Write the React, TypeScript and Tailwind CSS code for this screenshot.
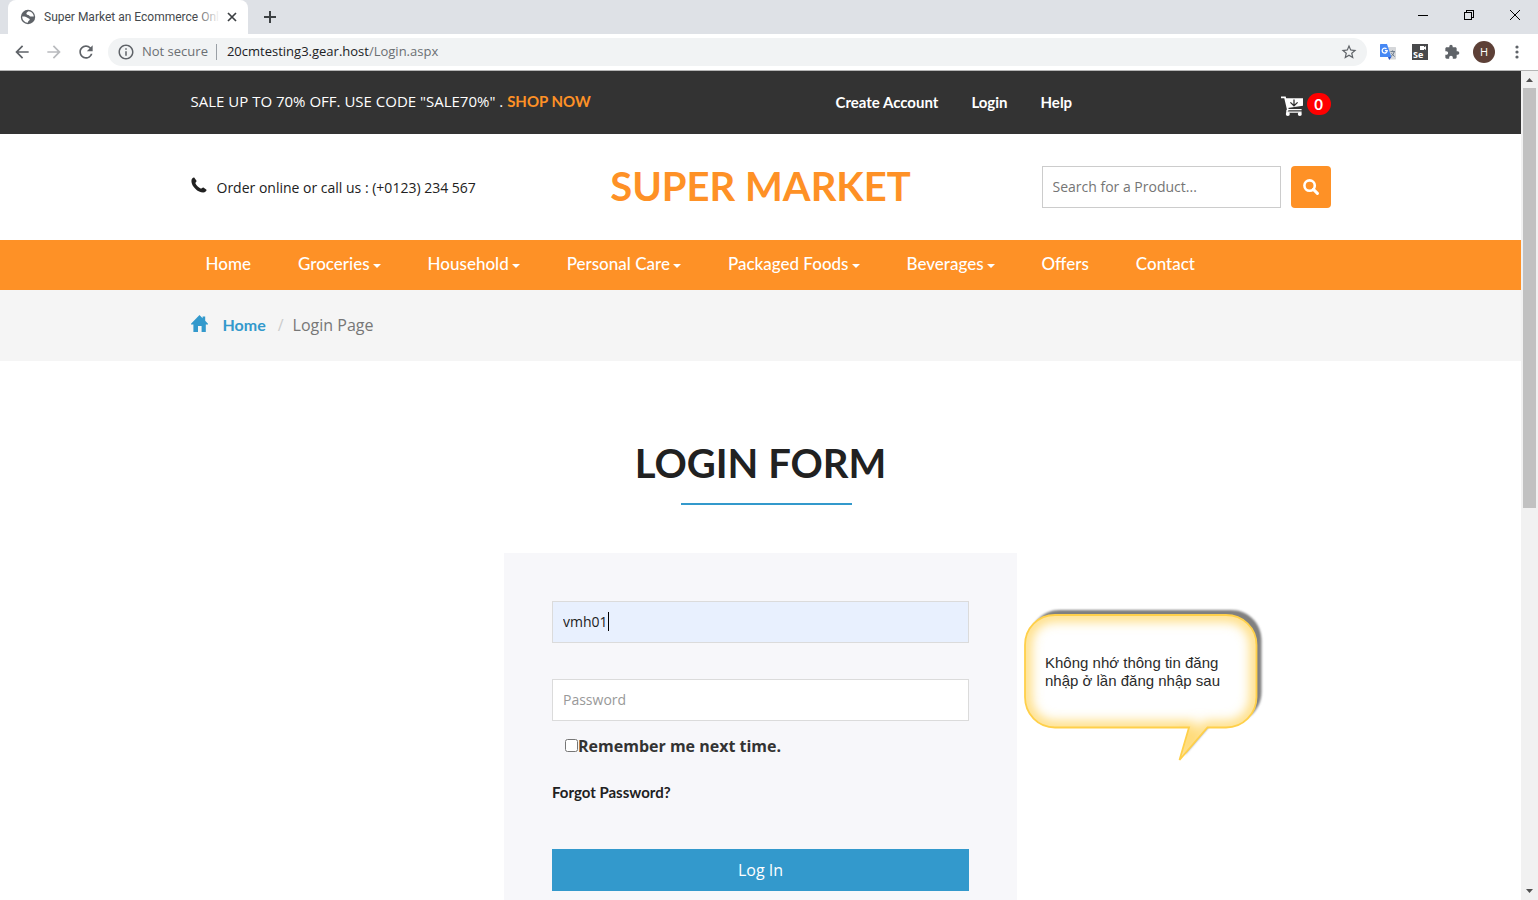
import type { ReactNode } from "react";
import { MdRefresh, MdExtension, MdStarBorder, MdArrowBack, MdArrowForward, MdInfoOutline } from "react-icons/md";

const ui = "font-['Open_Sans','Noto_Sans',sans-serif]";
const display = "font-[Lato,'Open_Sans',sans-serif]";

function TabStrip() {
  return (
    <div className="flex h-[34px] shrink-0 items-stretch bg-[#dee1e6]">
      <div className="ml-2 flex w-60 items-center rounded-t-lg bg-white pl-3 pr-2">
        <svg viewBox="0 0 16 16" className="size-4 shrink-0">
          <circle cx="8" cy="8" r="7.2" fill="#5f6368" />
          <path d="M8.6 2.2C6.6 3 6 4.2 6.6 5.2C7.4 6 9 5.6 9.4 6.8C9.6 7.8 11.4 7.4 13.8 7.4C13.8 5 11.4 2.4 8.6 2.2Z" fill="#fff" />
          <path d="M2.2 7.6C4 7.4 6.2 7.8 7.4 8.8C8.4 9.8 9.8 9.4 9.8 10.6C9.6 11.8 8 11.6 7.8 13.8C4.6 13.6 2.2 11 2.2 7.6Z" fill="#fff" />
        </svg>
        <span className="relative ml-2 w-[172px] shrink-0 whitespace-nowrap font-[Roboto,sans-serif] text-xs text-[#45494d]">
          Super Market an Ecommerce Onl
          <span className="absolute inset-y-0 -right-1 w-6 bg-gradient-to-r from-transparent to-white" />
        </span>
        <button aria-label="Close tab" className="ml-2 flex size-4 items-center justify-center">
          <svg viewBox="0 0 10 10" className="size-[10px] stroke-[#3c4043]" strokeWidth="1.7">
            <path d="M1 1L9 9M9 1L1 9" />
          </svg>
        </button>
      </div>
      <button aria-label="New tab" className="flex w-11 items-center justify-center">
        <svg viewBox="0 0 12 12" className="size-3 stroke-[#3c4043]" strokeWidth="2">
          <path d="M6 0V12M0 6H12" />
        </svg>
      </button>
      <div className="ml-auto flex h-[29px] items-center">
        <button aria-label="Minimize" className="flex w-[46px] justify-center">
          <svg viewBox="0 0 10 10" className="size-[10px] stroke-black" shapeRendering="crispEdges">
            <path d="M0 5.5H10" />
          </svg>
        </button>
        <button aria-label="Restore" className="flex w-[46px] justify-center">
          <svg viewBox="0 0 10 10" className="size-[10px] fill-none stroke-black" shapeRendering="crispEdges">
            <path d="M.5 2.5H7.5V9.5H.5ZM2.5 2.5V.5H9.5V7.5H7.5" />
          </svg>
        </button>
        <button aria-label="Close window" className="flex w-[46px] justify-center">
          <svg viewBox="0 0 10 10" className="size-[10px] stroke-black">
            <path d="M0 0L10 10M10 0L0 10" />
          </svg>
        </button>
      </div>
    </div>
  );
}

function TranslateIcon() {
  return (
    <svg viewBox="0 0 16 16" className="size-4">
      <path d="M6 3H15.4Q16 3 16 3.6V14.8Q16 15.4 15.4 15.4H9Z" fill="#d5d7da" />
      <path d="M10.4 7.6H15M12.6 6.4V7.6M14.2 7.6C13.8 9.8 12.4 11.4 11 12.4M11.4 9.2L14.6 12.6" stroke="#6b7b8c" strokeWidth="1" fill="none" />
      <path d="M.6 0H7L11.4 13H.6Q0 13 0 12.4V.6Q0 0 .6 0Z" fill="#4688f4" />
      <path d="M8 13H11.4L9.2 16Z" fill="#2a56c6" />
      <path d="M6.5 4.8A2.5 2.5 0 1 0 7.2 6.7H4.9" stroke="#fff" strokeWidth="1.3" fill="none" />
    </svg>
  );
}

function Toolbar() {
  return (
    <div className="flex h-9 shrink-0 items-center bg-white px-3">
      <button aria-label="Back" className="text-[#5f6368]">
        <MdArrowBack className="size-5" />
      </button>
      <button aria-label="Forward" className="ml-3 text-[#b9bbbe]">
        <MdArrowForward className="size-5" />
      </button>
      <button aria-label="Reload" className="ml-3 text-[#5f6368]">
        <MdRefresh className="size-5" />
      </button>
      <div className="ml-3 flex h-7 flex-1 items-center rounded-full bg-[#f1f3f4] px-[9px] text-[13px]">
        <MdInfoOutline className="size-[18px] text-[#5f6368]" />
        <span className="ml-[7px] text-[#6b6f73]">Not secure</span>
        <span className="ml-2 mr-[10px] h-4 w-px bg-[#9aa0a6]" />
        <span className="text-[#202124]">
          20cmtesting3.gear.host<span className="text-[#6b6f73]">/Login.aspx</span>
        </span>
        <button aria-label="Bookmark this page" className="ml-auto text-[#5f6368]">
          <MdStarBorder className="size-[18px]" />
        </button>
      </div>
      <div className="ml-[13px] flex items-center gap-4">
        <button aria-label="Google Translate">
          <TranslateIcon />
        </button>
        <button aria-label="Selenium IDE" className="relative flex size-4 items-end bg-[#48494b] pl-px text-[9px] font-bold leading-[10px] text-white">
          Se
          <svg viewBox="0 0 6 4" className="absolute right-[2px] top-[2px] h-1 w-[6px] fill-white">
            <path d="M0 0H4V1.3L6 0V4L4 2.7V4H0Z" />
          </svg>
        </button>
        <button aria-label="Extensions" className="text-[#5f6368]">
          <MdExtension className="size-4" />
        </button>
      </div>
      <button aria-label="Profile" className="ml-[13px] size-[22px] rounded-full bg-[#5d4037] text-[11px] leading-[22px] text-white">
        H
      </button>
      <button aria-label="Menu" className="ml-[13px] flex w-[18px] justify-center">
        <svg viewBox="0 0 4 14" className="h-[14px] w-1 fill-[#5f6368]">
          <circle cx="2" cy="2" r="1.6" />
          <circle cx="2" cy="7" r="1.6" />
          <circle cx="2" cy="12" r="1.6" />
        </svg>
      </button>
    </div>
  );
}

function Container({ className, children }: { className?: string; children: ReactNode }) {
  return <div className={`mx-auto w-full max-w-[1140px] ${className ?? ""}`}>{children}</div>;
}

function TopBar() {
  return (
    <div className="bg-[#333] text-white">
      <Container className="flex h-[63px] items-center">
        <p className="w-[645px] pb-[2px] text-[15px]">
          SALE UP TO 70% OFF. USE CODE "SALE70%" .{" "}
          <a href="#shop" className={`${display} font-bold text-[#fe9126]`}>SHOP NOW</a>
        </p>
        <nav className={`${display} flex gap-[33px] text-[15px] font-bold`}>
          <a href="#register">Create Account</a>
          <a href="#login">Login</a>
          <a href="#help">Help</a>
        </nav>
        <button aria-label="Cart, 0 items" className="ml-auto flex items-end gap-1 pt-1">
          <svg viewBox="0 0 22 20" className="h-5 w-[22px]">
            <path d="M0 1.4H4L6.8 13.4L5.8 15.6" fill="none" stroke="#fff" strokeWidth="1.8" />
            <path d="M4.6 2.2H22V9.8L6.6 12Z" fill="#fff" />
            <path d="M6.4 13H20.6V14.2H6.4ZM5 15.4H20.6V16.8H5Z" fill="#fff" />
            <circle cx="6.8" cy="18" r="2" fill="#fff" />
            <circle cx="18.8" cy="18" r="2" fill="#fff" />
            <path d="M13 3.4V9.6M9.4 6.4L13 9.8L16.6 6.4" fill="none" stroke="#333" strokeWidth="1.3" />
          </svg>
          <span className={`${display} mb-px flex h-[22px] w-6 items-center justify-center rounded-full bg-[#f00] text-[15px] font-bold`}>0</span>
        </button>
      </Container>
    </div>
  );
}

function Header() {
  return (
    <Container className="grid h-[106px] grid-cols-[1fr_auto_1fr] items-center">
      <p className="flex items-start gap-[10px] text-sm leading-5 text-[#212121]">
        <svg viewBox="0 0 16 16" className="size-4 fill-[#212121]">
          <path d="M3.2.6C2 .3.4 2 .4 4C.4 9.5 7 15.6 12.2 15.6C14 15.6 15.8 14 15.5 12.8L12.4 10.6C11.6 10.1 10.7 11.9 9.6 11.5C7.6 10.8 5.1 8.2 4.4 6.3C4.2 5.4 5.9 4.6 5.5 3.7Z" />
        </svg>
        <span className="pt-px">Order online or call us : (+0123) 234 567</span>
      </p>
      <h1 className={`${display} pb-[2px] text-[40px] font-bold leading-none text-[#fe9126]`}>
        <a href="#home">SUPER MARKET</a>
      </h1>
      <form className="flex justify-end gap-[10px]">
        <input
          type="search"
          aria-label="Search"
          placeholder="Search for a Product..."
          className="h-[42px] w-[239px] border border-[#ccc] px-[10px] pb-[2px] text-sm placeholder:text-[#757575]"
        />
        <button type="button" aria-label="Search" className="flex h-[42px] w-10 items-center justify-center rounded bg-[#fe9126]">
          <svg viewBox="0 0 16 16" className="size-4 fill-none stroke-white">
            <circle cx="6.6" cy="6.6" r="5.2" strokeWidth="2.6" />
            <path d="M10.4 10.4L14.4 14.4" strokeWidth="3" strokeLinecap="round" />
          </svg>
        </button>
      </form>
    </Container>
  );
}

const menu = [
  { label: "Home", drop: false },
  { label: "Groceries", drop: true },
  { label: "Household", drop: true },
  { label: "Personal Care", drop: true },
  { label: "Packaged Foods", drop: true },
  { label: "Beverages", drop: true },
  { label: "Offers", drop: false },
  { label: "Contact", drop: false },
];

function MainNav() {
  return (
    <nav className="bg-[#fe9126]">
      <Container>
        <ul className={`${display} flex h-[50px] items-center gap-[47px] pb-[2px] pl-[15px] text-[17px] font-medium text-white`}>
          {menu.map((m) => (
            <li key={m.label}>
              <a href="#menu" className="flex items-center gap-[3px]">
                {m.label}
                {m.drop && (
                  <svg viewBox="0 0 8 4" className="mt-1 h-1 w-2 fill-white">
                    <path d="M0 0H8L4 4Z" />
                  </svg>
                )}
              </a>
            </li>
          ))}
        </ul>
      </Container>
    </nav>
  );
}

function Breadcrumb() {
  return (
    <div className="bg-[#f5f5f5]">
      <Container className="flex h-[71px] items-center pb-[2px] text-base">
        <svg viewBox="0 0 17 17" className="mb-[2px] h-[17px] w-[17px] fill-[#3399cc]">
          <path d="M8.5 0L11.6 3.2V1.6H14.2V5.8L17 8.8V9.6H14.8V17H10.6V11H7V17H2.4V9.6H0V8.8Z" />
        </svg>
        <a href="#home" className={`${display} ml-[15px] font-bold text-[#3399cc]`}>Home</a>
        <span className="ml-3 mr-[9px] text-[#ccc]">/</span>
        <span className="text-[#777]">Login Page</span>
      </Container>
    </div>
  );
}

function Callout() {
  const bubble =
    "M35 15H206C223 15 236.5 28 236.5 45V97C236.5 114 223 127.5 206 127.5H187.5L159.5 160L169 127.5H35C18 127.5 5 114 5 97V45C5 28 18 15 35 15Z";
  return (
    <div className="absolute left-full top-[47px] ml-[3px] h-[170px] w-[250px] pl-[25px] pt-[54px]">
      <svg viewBox="0 0 250 170" className="absolute inset-0">
        <defs>
          <clipPath id="bubble">
            <path d={bubble} />
          </clipPath>
          <filter id="glow" x="-20%" y="-20%" width="140%" height="140%">
            <feGaussianBlur stdDeviation="6" />
          </filter>
          <filter id="shade" x="-20%" y="-20%" width="140%" height="140%">
            <feGaussianBlur stdDeviation="1.2" />
          </filter>
        </defs>
        <path d={bubble} fill="#808080" filter="url(#shade)" transform="translate(5 -5)" />
        <path d={bubble} fill="#fff" />
        <g clipPath="url(#bubble)">
          <path d={bubble} fill="none" stroke="#ffd35c" strokeWidth="12" strokeOpacity="0.85" filter="url(#glow)" />
        </g>
        <path d={bubble} fill="none" stroke="#ffd04a" strokeWidth="1.8" />
      </svg>
      <p className="relative font-['Liberation_Sans',sans-serif] text-[15px] leading-[18px] text-[#2b2b2b]">
        Không nhớ thông tin đăng
        <br />
        nhập ở lần đăng nhập sau
      </p>
    </div>
  );
}

function LoginSection() {
  const field = "block h-[42px] w-full border border-[#dbdbdb] px-[10px] pb-[2px] text-sm text-[#212121]";
  return (
    <Container className="pt-20">
      <h2 className={`${display} text-center text-[40px] font-bold leading-[44px] text-[#212121]`}>LOGIN FORM</h2>
      <div className="ml-[43%] mt-[18px] h-[2px] w-[15%] bg-[#3399cc]" />
      <div className="relative mx-auto mt-12 w-[45%] bg-[#f7f7fa]">
        <form className="flex flex-col items-start p-12">
          <div className="relative w-full">
            <input aria-label="User name" defaultValue="vmh01" className={`${field} bg-[#e8f0fe]`} />
            <span className="absolute left-14 top-[11px] h-[19px] w-px bg-black" />
          </div>
          <input type="password" aria-label="Password" placeholder="Password" className={`${field} mt-9 bg-white placeholder:text-[#999]`} />
          <label className="ml-[13px] mt-[13px] flex items-center text-base font-bold text-[#333]">
            <input type="checkbox" className="mb-[2px] size-[13px]" />
            Remember me next time.
          </label>
          <a href="#forgot" className={`${display} mt-6 text-[15px] font-bold leading-5 text-[#212121]`}>
            Forgot Password?
          </a>
          <button type="button" className="mt-[47px] h-[42px] w-full bg-[#3399cc] text-base text-white">
            Log In
          </button>
        </form>
        <Callout />
      </div>
    </Container>
  );
}

function Scrollbar() {
  return (
    <div aria-hidden="true" className="flex w-[17px] shrink-0 flex-col items-center bg-[#f1f1f1]">
      <svg viewBox="0 0 7 4" className="mb-[6px] mt-[7px] h-1 w-[7px] shrink-0 fill-[#505050]">
        <path d="M0 4H7L3.5 0Z" />
      </svg>
      <div className="h-[420px] w-[13px] bg-[#c1c1c1]" />
      <svg viewBox="0 0 7 4" className="mb-[7px] mt-auto h-1 w-[7px] shrink-0 fill-[#505050]">
        <path d="M0 0H7L3.5 4Z" />
      </svg>
    </div>
  );
}

export default function App() {
  return (
    <div className={`${ui} flex h-screen flex-col overflow-hidden bg-white`}>
      <TabStrip />
      <Toolbar />
      <div className="flex min-h-0 flex-1 border-t border-[#b5b5b5]">
        <main className="min-w-0 flex-1 overflow-hidden">
          <TopBar />
          <Header />
          <MainNav />
          <Breadcrumb />
          <LoginSection />
        </main>
        <Scrollbar />
      </div>
    </div>
  );
}
